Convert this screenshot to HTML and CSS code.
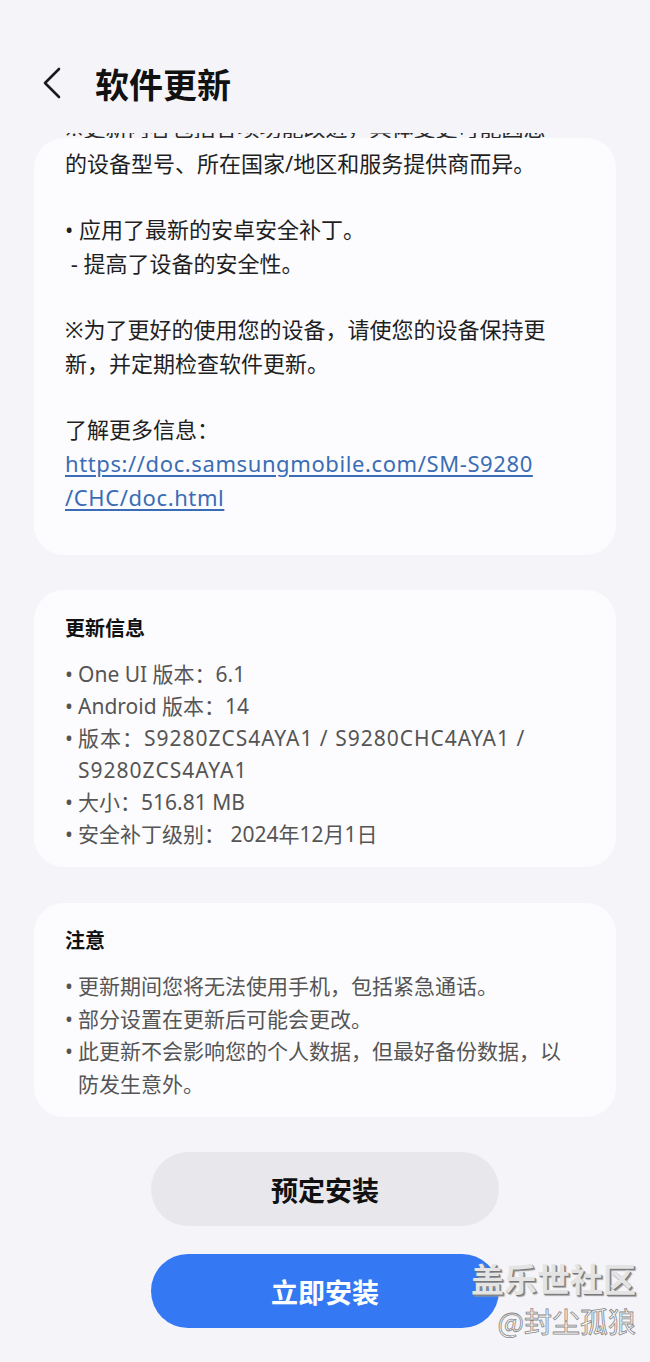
FILE: index.html
```html
<!DOCTYPE html>
<html lang="zh-CN">
<head>
  <meta charset="UTF-8">
  <meta name="viewport" content="width=device-width, initial-scale=1.0">
  <title>软件更新</title>
  <link rel="stylesheet" href="styles.css">
</head>
<body>
<header class="topbar">
  <svg class="back" width="22" height="32" viewBox="0 0 22 32">
    <path d="M18 2 L4 16 L18 30" fill="none" stroke="#1a1a1a" stroke-width="2.6" stroke-linecap="round" stroke-linejoin="round"/>
  </svg>
  <h1>软件更新</h1>
</header>

<div class="cut">
  <p>※更新内容包括各项功能改进，具体变更可能因您</p>
</div>

<section class="card notes">
  <p>的设备型号、所在国家/地区和服务提供商而异。</p>
  <p>• 应用了最新的安卓安全补丁。<br>&nbsp;- 提高了设备的安全性。</p>
  <p>※为了更好的使用您的设备，请使您的设备保持更新，并定期检查软件更新。</p>
  <p>了解更多信息：<br><a href="#">https://doc.samsungmobile.com/SM-S9280<br>/CHC/doc.html</a></p>
</section>

<section class="card info">
  <h2>更新信息</h2>
  <ul>
    <li><span class="dot">•</span><span>One UI 版本：6.1</span></li>
    <li><span class="dot">•</span><span>Android 版本：14</span></li>
    <li><span class="dot">•</span><span class="code">版本：S9280ZCS4AYA1 / S9280CHC4AYA1 / S9280ZCS4AYA1</span></li>
    <li><span class="dot">•</span><span>大小：516.81 MB</span></li>
    <li><span class="dot">•</span><span>安全补丁级别： 2024年12月1日</span></li>
  </ul>
</section>

<section class="card info warn">
  <h2>注意</h2>
  <ul>
    <li><span class="dot">•</span><span>更新期间您将无法使用手机，包括紧急通话。</span></li>
    <li><span class="dot">•</span><span>部分设置在更新后可能会更改。</span></li>
    <li><span class="dot">•</span><span>此更新不会影响您的个人数据，但最好备份数据，以防发生意外。</span></li>
  </ul>
</section>

<div class="actions">
  <button class="btn later">预定安装</button>
  <button class="btn now">立即安装</button>
</div>

<div class="watermark">
  <div class="wm-big">盖乐世社区</div>
  <div class="wm-small">@封尘孤狼</div>
</div>
</body>
</html>
```

FILE: styles.css
```css
body {
  margin: 0;
  padding: 0;
  background-color: #f5f5f9;
  font-family: "Noto Sans", "Noto Sans CJK SC", sans-serif;
  color: #1f1f1f;
  position: relative;
  min-height: 1362px;
}
.topbar {
  display: flex;
  align-items: center;
  height: 60px;
  margin-top: 53px;
  padding-left: 41px;
}
.topbar h1 {
  margin: 0 0 0 32px;
  font-size: 34px;
  font-weight: 700;
  color: #111;
  font-family: "Noto Sans CJK SC", sans-serif;
}
/* last line of the scrolled-away text, only its bottom edge shows */
.cut {
  height: 5px;
  margin-top: 20px;
  overflow: hidden;
  position: relative;
}
.cut p {
  position: absolute;
  left: 65px;
  bottom: 0;
  margin: 0;
  font-size: 22px;
  line-height: 22px;
  white-space: nowrap;
  color: #2a2a2a;
}
.card {
  margin: 0 34px;
  background-color: #fcfcfe;
  border-radius: 30px;
}
.notes {
  padding: 8px 45px 41px 31px;
  font-size: 22px;
  line-height: 34px;
}
.notes p {
  margin: 0 0 32px;
}
.notes p:last-child {
  margin-bottom: 0;
}
.notes a {
  color: #3a6db5;
  text-decoration: underline;
  text-underline-offset: 3px;
  letter-spacing: 0.6px;
}
.info {
  margin-top: 35px;
  padding: 24px 45px 17px 31px;
}
.info h2 {
  margin: 0 0 16px;
  font-size: 20px;
  line-height: 28px;
  font-weight: 700;
  color: #111;
  font-family: "Noto Sans CJK SC", sans-serif;
}
.info ul {
  list-style: none;
  margin: 0;
  padding: 0;
}
.info li {
  display: flex;
  font-size: 21px;
  line-height: 32px;
  color: #555;
}
.info .dot {
  width: 13px;
  flex-shrink: 0;
}
.info .code {
  letter-spacing: 1px;
}
.warn {
  margin-top: 36px;
  padding-top: 23px;
  padding-bottom: 17px;
}
.warn li {
  line-height: 32.5px;
}
.actions {
  display: flex;
  flex-direction: column;
  align-items: center;
  gap: 28px;
  margin-top: 35px;
}
.btn {
  width: 348px;
  height: 74px;
  border: none;
  border-radius: 37px;
  font-family: "Noto Sans CJK SC", sans-serif;
  font-size: 27px;
  font-weight: 700;
  cursor: pointer;
}
.later {
  background-color: #e8e8ec;
  color: #111;
}
.now {
  background-color: #3479f3;
  color: #fff;
}
.watermark {
  position: absolute;
  top: 1258px;
  right: 14px;
  text-align: right;
  font-family: "Noto Sans CJK SC", sans-serif;
}
.wm-big {
  font-size: 33px;
  line-height: 40px;
  font-weight: 700;
  color: #e4e4e4;
  text-shadow: 1px 1px 0 #777, 2px 2px 1px #999;
}
.wm-small {
  margin-top: 6px;
  font-size: 28px;
  line-height: 34px;
  color: #fafafa;
  -webkit-text-stroke: 0.8px #888;
}
```
